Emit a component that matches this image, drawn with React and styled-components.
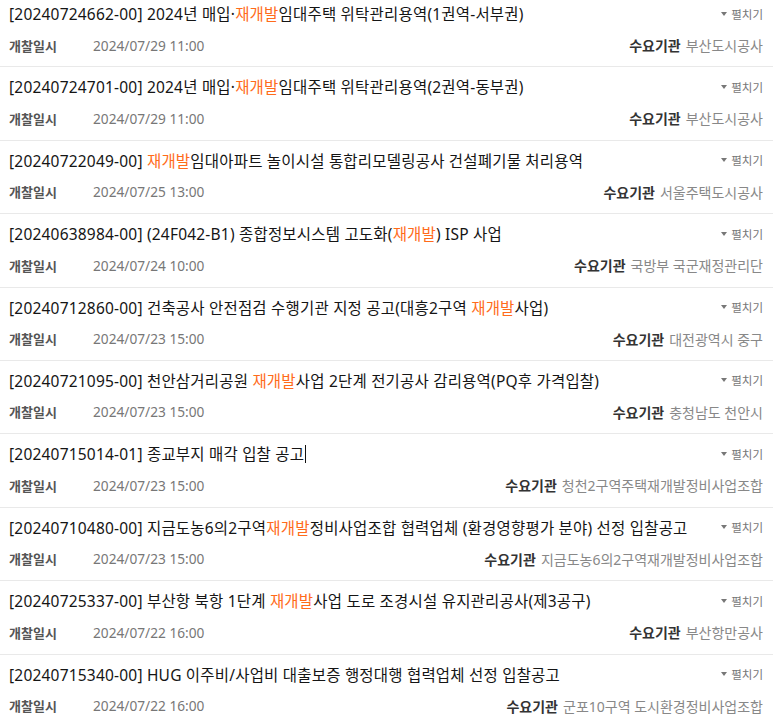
import React from 'react';
import styled, { createGlobalStyle } from 'styled-components';

const GlobalStyle = createGlobalStyle`
  html, body {
    margin: 0;
    padding: 0;
    background: #fff;
  }
  body {
    font-family: 'Noto Sans', 'Noto Sans CJK KR', sans-serif;
    overflow: hidden;
  }
`;

const List = styled.ul`
  list-style: none;
  margin: -6px 0 0;
  padding: 0;
  width: 773px;
`;

const Row = styled.li`
  box-sizing: border-box;
  height: 73.4px;
  padding: 9px 10px 0 9px;
  border-bottom: 1px solid #e9e9e9;
`;

const TitleLine = styled.div`
  display: flex;
  justify-content: space-between;
  align-items: center;
  height: 22px;
`;

const Title = styled.div`
  font-size: 15.5px;
  line-height: 22px;
  letter-spacing: 0.2px;
  color: #151515;
  white-space: nowrap;
`;

const Hot = styled.span`
  color: #ff6b1a;
`;

const Caret = styled.span`
  display: inline-block;
  width: 0;
  height: 18px;
  border-left: 1px solid #111;
  vertical-align: -3px;
  margin-left: 1px;
`;

const Toggle = styled.button`
  display: flex;
  align-items: center;
  gap: 4px;
  border: 0;
  background: none;
  padding: 0;
  margin-top: -1px;
  font-family: inherit;
  font-size: 11.5px;
  color: #777;
  cursor: pointer;
`;

const Arrow = styled.span`
  width: 0;
  height: 0;
  border-left: 3px solid transparent;
  border-right: 3px solid transparent;
  border-top: 4px solid #777;
`;

const MetaLine = styled.div`
  display: flex;
  justify-content: space-between;
  align-items: center;
  margin-top: 10px;
  height: 20px;
  font-size: 13px;
`;

const Label = styled.span`
  display: inline-block;
  width: 84px;
  font-weight: 700;
  color: #555;
`;

const DateText = styled.span`
  font-size: 13.7px;
  color: #777;
`;

const Agency = styled.div`
  display: flex;
  gap: 5px;
  font-size: 14px;
  white-space: nowrap;
`;

const AgencyLabel = styled.span`
  font-weight: 700;
  color: #333;
`;

const AgencyName = styled.span`
  color: #888;
`;

const items = [
  {
    no: '20240724662-00',
    title: ['2024년 매입·', '*재개발', '임대주택 위탁관리용역(1권역-서부권)'],
    date: '2024/07/29 11:00',
    agency: '부산도시공사',
  },
  {
    no: '20240724701-00',
    title: ['2024년 매입·', '*재개발', '임대주택 위탁관리용역(2권역-동부권)'],
    date: '2024/07/29 11:00',
    agency: '부산도시공사',
  },
  {
    no: '20240722049-00',
    title: ['*재개발', '임대아파트 놀이시설 통합리모델링공사 건설폐기물 처리용역'],
    date: '2024/07/25 13:00',
    agency: '서울주택도시공사',
  },
  {
    no: '20240638984-00',
    title: ['(24F042-B1) 종합정보시스템 고도화(', '*재개발', ') ISP 사업'],
    date: '2024/07/24 10:00',
    agency: '국방부 국군재정관리단',
  },
  {
    no: '20240712860-00',
    title: ['건축공사 안전점검 수행기관 지정 공고(대흥2구역 ', '*재개발', '사업)'],
    date: '2024/07/23 15:00',
    agency: '대전광역시 중구',
  },
  {
    no: '20240721095-00',
    title: ['천안삼거리공원 ', '*재개발', '사업 2단계 전기공사 감리용역(PQ후 가격입찰)'],
    date: '2024/07/23 15:00',
    agency: '충청남도 천안시',
  },
  {
    no: '20240715014-01',
    title: ['종교부지 매각 입찰 공고'],
    caret: true,
    date: '2024/07/23 15:00',
    agency: '청천2구역주택재개발정비사업조합',
  },
  {
    no: '20240710480-00',
    title: ['지금도농6의2구역', '*재개발', '정비사업조합 협력업체 (환경영향평가 분야) 선정 입찰공고'],
    date: '2024/07/23 15:00',
    agency: '지금도농6의2구역재개발정비사업조합',
  },
  {
    no: '20240725337-00',
    title: ['부산항 북항 1단계 ', '*재개발', '사업 도로 조경시설 유지관리공사(제3공구)'],
    date: '2024/07/22 16:00',
    agency: '부산항만공사',
  },
  {
    no: '20240715340-00',
    title: ['HUG 이주비/사업비 대출보증 행정대행 협력업체 선정 입찰공고'],
    date: '2024/07/22 16:00',
    agency: '군포10구역 도시환경정비사업조합',
  },
];

function BidRow({ item }) {
  return (
    <Row>
      <TitleLine>
        <Title>
          [{item.no}]{' '}
          {item.title.map((part, i) =>
            part.startsWith('*') ? <Hot key={i}>{part.slice(1)}</Hot> : <span key={i}>{part}</span>
          )}
          {item.caret && <Caret />}
        </Title>
        <Toggle type="button">
          <Arrow />
          펼치기
        </Toggle>
      </TitleLine>
      <MetaLine>
        <div>
          <Label>개찰일시</Label>
          <DateText>{item.date}</DateText>
        </div>
        <Agency>
          <AgencyLabel>수요기관</AgencyLabel>
          <AgencyName>{item.agency}</AgencyName>
        </Agency>
      </MetaLine>
    </Row>
  );
}

export default function App() {
  return (
    <>
      <GlobalStyle />
      <List>
        {items.map((item) => (
          <BidRow key={item.no} item={item} />
        ))}
      </List>
    </>
  );
}
